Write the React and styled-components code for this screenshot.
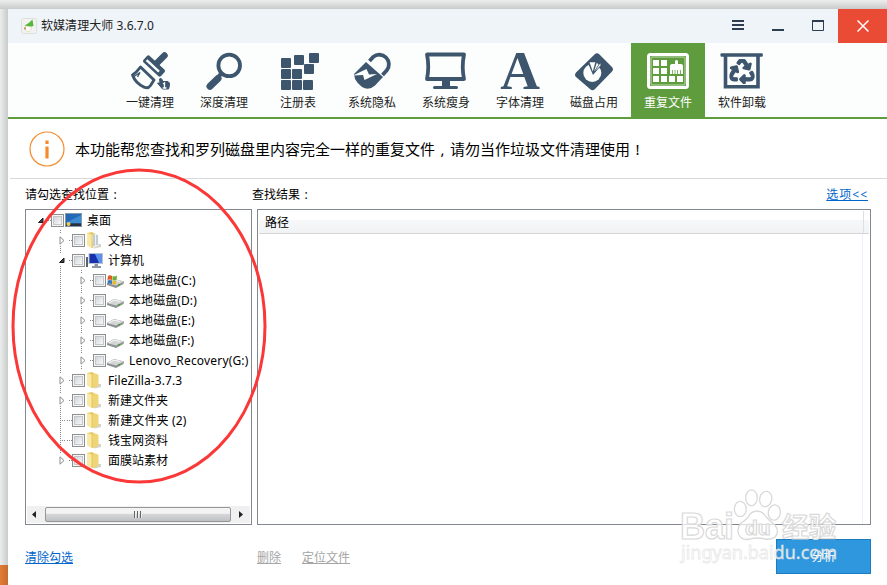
import { FaRecycle } from "react-icons/fa";
import styled, { createGlobalStyle } from "styled-components";

const INK = "#3d566e";
const GREEN = "#5f9c3d";

const tools = [
  { label: "一键清理", Icon: BrushIcon },
  { label: "深度清理", Icon: SearchIcon },
  { label: "注册表", Icon: RegistryIcon },
  { label: "系统隐私", Icon: LockIcon },
  { label: "系统瘦身", Icon: MonitorIcon },
  { label: "字体清理", Icon: FontIcon },
  { label: "磁盘占用", Icon: DiskIcon },
  { label: "重复文件", Icon: DuplicateIcon, active: true },
  { label: "软件卸载", Icon: UninstallIcon },
];

const tree = [
  { label: "桌面", depth: 0, arrow: "open", icon: "desktop" },
  { label: "文档", depth: 1, arrow: "closed", icon: "docs" },
  { label: "计算机", depth: 1, arrow: "open", icon: "computer" },
  { label: "本地磁盘(C:)", depth: 2, arrow: "closed", icon: "system", spacing: 0.08 },
  { label: "本地磁盘(D:)", depth: 2, arrow: "closed", icon: "drive", spacing: 0.08 },
  { label: "本地磁盘(E:)", depth: 2, arrow: "closed", icon: "drive", spacing: 0.08 },
  { label: "本地磁盘(F:)", depth: 2, arrow: "closed", icon: "drive", spacing: 0.08 },
  { label: "Lenovo_Recovery(G:)", depth: 2, arrow: "closed", icon: "drive", spacing: 0.17 },
  { label: "FileZilla-3.7.3", depth: 1, arrow: "closed", icon: "folder", spacing: 0.08 },
  { label: "新建文件夹", depth: 1, arrow: "closed", icon: "folder" },
  { label: "新建文件夹 (2)", depth: 1, icon: "folder", spacing: 0.15 },
  { label: "钱宝网资料", depth: 1, icon: "folder" },
  { label: "面膜站素材", depth: 1, arrow: "closed", icon: "folder", last: true },
];

function BrushIcon() {
  return (
    <ToolSvg viewBox="0 0 44 44">
      <path d="M36.5 6.5 L28 15" stroke={INK} strokeWidth="6.5" strokeLinecap="round" />
      <rect x="-12" y="-4.5" width="24" height="9" rx="2" fill={INK} transform="translate(26 17) rotate(43)" />
      <rect x="-9.5" y="-0.5" width="17" height="2.4" fill="#fcfefd" transform="translate(26 17) rotate(43)" />
      <path d="M12.5 18 L26 31 L22.5 36.5 Q20 40 16.5 38.3 Q7.5 34.5 4.5 26 Q8.5 23.5 12.5 18Z" fill="none" stroke={INK} strokeWidth="2.9" strokeLinejoin="round" />
      <path d="M6 27.5 L12 23.5 L9.5 28" fill="none" stroke={INK} strokeWidth="1.4" />
      <path d="M31.5 30 q1.5-1.5 2.5 0.5 l1 2 h5 q2 1 1.5 4 l-1 3.5 h-6 l-5-6 h2.500z" fill={INK} stroke={INK} strokeLinejoin="round" />
      <path d="M35 35 L36.5 34 V39 M34.7 39 H38.5" stroke="#fff" strokeWidth="1.3" fill="none" />
    </ToolSvg>
  );
}

function SearchIcon() {
  return (
    <ToolSvg viewBox="0 0 44 44">
      <circle cx="27.2" cy="16.4" r="10.8" fill="none" stroke={INK} strokeWidth="3.8" />
      <path d="M20 24 L17 27" stroke={INK} strokeWidth="4" />
      <path d="M16 29.5 L8 37.3" stroke={INK} strokeWidth="7" strokeLinecap="round" />
    </ToolSvg>
  );
}

const registryCells = [
  [5, 9], [18, 6], [33, 4],
  [5, 20], [16, 20], [28, 15],
  [5, 31], [16, 31], [27, 31],
];

function RegistryIcon() {
  return (
    <ToolSvg viewBox="0 0 44 44">
      {registryCells.map(([x, y]) => (
        <rect key={`${x}-${y}`} x={x} y={y} width="10" height="10" rx="1" fill={INK} />
      ))}
    </ToolSvg>
  );
}

function LockIcon() {
  return (
    <ToolSvg viewBox="0 0 44 44">
      <path d="M19.5 12 L23.2 7.9 A9.6 9.6 0 0 1 36.8 21.3 L32.5 26" fill="none" stroke={INK} strokeWidth="3.8" />
      <path d="M16 13 L33 28 L25 36.5 Q19 42 12 38 Q7 34 5 30 L4 25Z" fill={INK} />
      <path d="M3 26.5 L16.5 20 L19 25.5 L27 25 L14.5 31 L13 26Z" fill="#fcfefd" />
    </ToolSvg>
  );
}

function MonitorIcon() {
  return (
    <ToolSvg viewBox="0 0 44 44">
      <path d="M3 5.5 H40 Q37.5 17.5 40 30 H3 Q5.5 17.5 3 5.5Z" fill="none" stroke={INK} strokeWidth="3.8" strokeLinejoin="round" />
      <path d="M18 31 H26 V37 H32.5 Q34 37 34 38.5 T32.5 40 H10.5 Q9 40 9 38.5 T10.5 37 H18Z" fill={INK} />
    </ToolSvg>
  );
}

function FontIcon() {
  return (
    <ToolSvg viewBox="0 0 44 44">
      <FontLetter x="22" y="40" textAnchor="middle">A</FontLetter>
    </ToolSvg>
  );
}

function DiskIcon() {
  return (
    <ToolSvg viewBox="0 0 44 44">
      <path d="M22.5 5.5 Q25 3 27.5 5.5 L40 18 Q42 20.5 40 22.5 L23 40 Q20.5 42.5 18 40 L4 28 Q2 26 4 23.5Z" fill={INK} />
      <circle cx="20.3" cy="24" r="9" fill="#fcfefd" />
      <path d="M21 26 L15.5 13 L24 11 L32 14 L27 19Z" fill={INK} />
      <path d="M20.8 22.5 L17.5 13.3 L23.3 13.3Z M22 22.5 L24.8 13.7 L26.5 15.5Z M23 22 L28.3 14.3 L28.5 16.5Z" fill="#fcfefd" />
    </ToolSvg>
  );
}

const duplicateCells = [
  [7, 11], [15, 11], [7, 19], [15, 19], [7, 27], [15, 27], [23, 27], [31, 27],
];

function DuplicateIcon() {
  return (
    <ToolSvg viewBox="0 0 44 44">
      <rect x="2.5" y="5.5" width="39" height="33" rx="2" fill="none" stroke="#fff" strokeWidth="3" />
      <rect x="5" y="8" width="34" height="28" rx="1" fill="none" stroke="#c4dab7" strokeWidth="1" />
      {duplicateCells.map(([x, y]) => (
        <rect key={`${x}-${y}`} x={x} y={y} width="6" height="6" fill="#fff" />
      ))}
      <path d="M24 25 V17 Q24 15 26 15 H29 V12 Q30.5 10 32 12 V15 H35 Q37 15 37 17 V25Z" fill="#fff" />
      <path d="M26.5 21 V25 M29 21 V25 M31.5 21 V25 M34.5 21 V25" stroke={GREEN} strokeWidth="0.8" />
    </ToolSvg>
  );
}

function UninstallIcon() {
  return (
    <ToolSvg viewBox="0 0 44 44">
      <rect x="0.5" y="4.3" width="42.3" height="3.5" rx="1" fill={INK} />
      <path d="M5.5 7 V37.7 H38 V7" fill="none" stroke={INK} strokeWidth="3.6" />
      <FaRecycle x="9.5" y="10" size="25" color={INK} stroke={INK} strokeWidth="24" />
    </ToolSvg>
  );
}

function AppLogo() {
  return (
    <svg width="16" height="16" viewBox="0 0 16 16">
      <rect x="0.5" y="0.5" width="15" height="15" rx="2" fill="#f2f3f1" stroke="#dcdfdc" />
      <path d="M11.5 1.5 L12.5 8 Q8 9.5 3.5 7.5 Q8 5.5 11.5 1.5Z" fill="#55b83c" />
      <path d="M5 8 L10.5 9 Q10 13.5 6.5 13.5 Q3 12 5 8Z" fill="#fff" stroke="#d7c9a4" strokeWidth="0.6" />
      <path d="M3.5 9 L5 9.5 L4.5 12 L3 11Z" fill="#c98b3f" />
    </svg>
  );
}

function TreeIcon({ name }) {
  if (name === "desktop") {
    return (
      <NodeSvg viewBox="0 0 18 18">
        <rect x="0.5" y="2.5" width="16" height="13" fill="#2468b8" stroke="#8298ab" />
        <path d="M1 12 Q8 8 16 4 V12Z" fill="#3d8bd0" />
        <path d="M1 12.5 H16 V15 H1Z" fill="#292f3b" />
        <circle cx="3.5" cy="13" r="2" fill="#e8ce55" />
      </NodeSvg>
    );
  }
  if (name === "computer") {
    return (
      <NodeSvg viewBox="0 0 18 18">
        <path d="M1 6 V16" stroke="#59636e" strokeWidth="2" />
        <rect x="3" y="2.5" width="13.5" height="10" fill="#1730ae" stroke="#b9c2d3" />
        <path d="M9 3 L16 3 V12 H13Z" fill="#5b91ea" />
        <path d="M8.5 13 H12 V15 H15 V17 H6 V15 H8.5Z" fill="#8995a4" />
      </NodeSvg>
    );
  }
  if (name === "system" || name === "drive") {
    return (
      <NodeSvg viewBox="0 0 18 18">
        <path d="M0 12 L7 8 L17 10.5 L16.5 13 L9 17 L0 14Z" fill="#8f9292" />
        <path d="M0 12 L7 8 L17 10.5 L9 14.5Z" fill="#d3d5d4" />
        <path d="M2 12 L7 9.2 L13 10.5" fill="none" stroke="#f6f7f6" />
        <rect x="11" y="13" width="2" height="1.5" fill="#47a52f" />
        {name === "system" && (
          <>
            <path d="M1 5 Q3 3.5 5 5 V9 Q3 8 0.5 9Z" fill="#e05b28" />
            <path d="M5.5 5 Q8 6 10 4.5 L9.5 9 Q7 10 5.5 9Z" fill="#68ad36" />
            <path d="M0.5 9.5 Q3 8.5 5 9.5 V13 Q3 12 1 13Z" fill="#3979bd" />
            <path d="M5.5 9.5 Q8 10.5 9.5 9.5 L9 13 Q7 14 5.5 13Z" fill="#e9b82c" />
          </>
        )}
      </NodeSvg>
    );
  }
  return (
    <NodeSvg viewBox="0 0 18 18">
      <path d="M9 13 L15 13 L15 16 L8 17.5Z" fill="#d5d2c8" />
      <path d="M1 2 L6 1 L9.5 3 V16 L6 17 L1 14Z" fill="#e9c962" />
      <path d="M1 2 L5.5 3.5 V16.5 L1 14Z" fill="#f8e9a5" />
      <path d="M6.5 4 L10 2.5 L12.5 4 V14.5 L7 17Z" fill={name === "docs" ? "#edf1f1" : "#f0d577"} />
      {name === "docs" && <path d="M8 3.5 V15 M11 4 V14" stroke="#97a9b5" />}
    </NodeSvg>
  );
}

function TreeRow({ node }) {
  return (
    <Row $depth={node.depth}>
      <ArrowCell $leaf={!node.arrow} $depth={node.depth} $last={node.last}>
        {node.arrow === "open" && (
          <svg width="8" height="8" viewBox="0 0 8 8">
            <path d="M6 2 V6.5 H1.5Z" fill="#404040" stroke="#1c1c1c" />
          </svg>
        )}
        {node.arrow === "closed" && (
          <svg width="8" height="9" viewBox="0 0 8 9">
            <path d="M2 0.8 L6 4.5 L2 8.2Z" fill="#fff" stroke="#8c8c8c" />
          </svg>
        )}
      </ArrowCell>
      <Branch $leaf={!node.arrow} />
      <Check />
      <TreeIcon name={node.icon} />
      <NodeLabel $spacing={node.spacing}>{node.label}</NodeLabel>
    </Row>
  );
}

function Watermark() {
  return (
    <WatermarkSvg viewBox="0 0 180 95">
      <g fill="#fff" fillOpacity="0.7" stroke="#d9d9d9" strokeWidth="1.3">
        <path d="M87 31 Q93 31 97 38 Q101 42 105 45 Q110 52 105 57 Q101 60 95 59 Q87 57 80 59 Q72 61 69 55 Q66 49 71 43 Q78 39 80 34 Q83 31 87 31Z" />
        <ellipse cx="81.5" cy="17.8" rx="5.8" ry="8" />
        <ellipse cx="95.7" cy="19" rx="6" ry="7.7" transform="rotate(12 95.7 19)" />
        <ellipse cx="70.3" cy="29" rx="6" ry="7.7" />
        <ellipse cx="104.3" cy="32.5" rx="6" ry="7.7" transform="rotate(8 104.3 32.5)" />
      </g>
      <BrandText x="10" y="59" textLength="54" lengthAdjust="spacingAndGlyphs">Bai</BrandText>
      <BrandText x="75" y="55" $size={21}>du</BrandText>
      <BrandText x="112" y="57" $size={27}>经验</BrandText>
      <SiteText x="11" y="79" textLength="156">jingyan.baidu.com</SiteText>
    </WatermarkSvg>
  );
}

function App() {
  return (
    <Desktop>
      <GlobalStyle />
      <Window>
        <TitleBar>
          <AppLogo />
          <Title>软媒清理大师 3.6.7.0</Title>
          <WindowButton>
            <svg width="12" height="12" viewBox="0 0 12 12">
              <path d="M0 1 H12 M0 5 H12 M0 9 H12" stroke="#2c3e50" strokeWidth="2" />
            </svg>
          </WindowButton>
          <WindowButton>
            <svg width="12" height="12" viewBox="0 0 12 12">
              <path d="M0 10 H12" stroke="#2c3e50" strokeWidth="2" />
            </svg>
          </WindowButton>
          <WindowButton>
            <svg width="12" height="12" viewBox="0 0 12 12">
              <path d="M0.5 1 V10.5 H11.5 V1" fill="none" stroke="#2c3e50" />
              <path d="M0 1 H12" stroke="#2c3e50" strokeWidth="2" />
            </svg>
          </WindowButton>
          <CloseButton>
            <svg width="12" height="12" viewBox="0 0 12 12">
              <path d="M0.5 0.5 L11.5 11.5 M11.5 0.5 L0.5 11.5" stroke="#fff" strokeWidth="1.5" />
            </svg>
          </CloseButton>
        </TitleBar>

        <Toolbar>
          {tools.map(({ label, Icon, active }) => (
            <Tool key={label} $active={active}>
              <Icon />
              <span>{label}</span>
            </Tool>
          ))}
        </Toolbar>

        <Notice>
          <svg width="36" height="36" viewBox="0 0 36 36">
            <circle cx="18" cy="18" r="17" fill="none" stroke="#f58a2c" strokeWidth="1.2" />
            <path d="M18 9.5 V13 M18 15.5 V27.5" stroke="#f58a2c" strokeWidth="3.2" />
          </svg>
          <p>
            本功能帮您查找和罗列磁盘里内容完全一样的重复文件<Punct>,</Punct>请勿当作垃圾文件清理使用<Punct>!</Punct>
          </p>
        </Notice>

        <Labels>
          <LocationLabel>请勾选查找位置<Punct>:</Punct></LocationLabel>
          <span>查找结果<Punct>:</Punct></span>
          <Options>选项&lt;&lt;</Options>
        </Labels>

        <Panels>
          <TreePanel>
            <Tree>
              {tree.map((node) => (
                <TreeRow key={node.label} node={node} />
              ))}
            </Tree>
            <ScrollBar>
              <svg width="5" height="7" viewBox="0 0 5 7">
                <path d="M4 0 V7 L0 3.5Z" fill="#222" />
              </svg>
              <Thumb>
                <i />
                <i />
                <i />
              </Thumb>
              <svg width="5" height="7" viewBox="0 0 5 7">
                <path d="M1 0 V7 L5 3.5Z" fill="#222" />
              </svg>
            </ScrollBar>
          </TreePanel>
          <ResultPanel>
            <ResultHeader>
              <span>路径</span>
            </ResultHeader>
            <ResultBody />
          </ResultPanel>
        </Panels>

        <Footer>
          <ClearLink>清除勾选</ClearLink>
          <FooterLink>删除</FooterLink>
          <FooterLink>定位文件</FooterLink>
          <Analyse>分析</Analyse>
        </Footer>
      </Window>
      <Circle viewBox="0 0 258 318">
        <ellipse cx="129" cy="159" rx="126" ry="156" fill="none" stroke="#fb3838" strokeWidth="3" />
      </Circle>
      <Watermark />
    </Desktop>
  );
}

const GlobalStyle = createGlobalStyle`
  * {
    box-sizing: border-box;
  }

  body {
    margin: 0;
    overflow: hidden;
    font-family: "Noto Sans", "Noto Sans CJK SC", sans-serif;
    font-size: 12px;
    color: #000;
  }

  svg {
    display: block;
    flex-shrink: 0;
  }
`;

const Desktop = styled.div`
  position: relative;
  width: 887px;
  height: 585px;
  padding: 9px 0 0 8px;
  overflow: hidden;
  background:
    linear-gradient(90deg, #e07c35, #c76b30) 0 565px / 8px 20px no-repeat,
    linear-gradient(90deg, #eceeed, #c9cbca) 0 9px / 8px 100% no-repeat,
    linear-gradient(180deg, #eceeed, #c9cbca) 0 0 / 100% 9px no-repeat;
`;

const Window = styled.main`
  display: flex;
  flex-direction: column;
  height: 576px;
  background: #fff;
`;

const TitleBar = styled.header`
  display: flex;
  align-items: center;
  height: 34px;
  padding-left: 13px;
  background: #eff4f9;
`;

const Title = styled.h1`
  flex: 1;
  margin: 0 0 0 4px;
  font-size: 12px;
  font-weight: 400;
  line-height: 34px;
  letter-spacing: 0.05px;
  color: #222;
`;

const WindowButton = styled.div`
  display: flex;
  align-items: center;
  justify-content: center;
  width: 40px;
  height: 34px;
`;

const CloseButton = styled(WindowButton)`
  width: 49px;
  background: #e94b35;
`;

const Toolbar = styled.nav`
  display: flex;
  height: 76px;
  padding-left: 105px;
  background: #fcfefd;
  border-bottom: 2px solid ${GREEN};
`;

const Tool = styled.div`
  display: flex;
  flex-direction: column;
  align-items: center;
  width: 74px;
  padding-top: 6px;
  line-height: 20px;
  color: ${({ $active }) => ($active ? "#fff" : "#222")};
  background: ${({ $active }) => ($active ? GREEN : "transparent")};
`;

const ToolSvg = styled.svg`
  width: 44px;
  height: 44px;
  overflow: visible;
`;

const FontLetter = styled.text`
  font-family: "Liberation Serif", serif;
  font-size: 55px;
  font-weight: 700;
  fill: ${INK};
`;

const Notice = styled.section`
  display: flex;
  align-items: center;
  height: 60px;
  margin-left: 2px;
  padding-left: 19px;
  border-bottom: 1px solid #d9d9d9;
  font-size: 15px;

  p {
    margin: 0 0 0 10px;
    white-space: nowrap;
  }
`;

/* full-width punctuation centred in its cell */
const Punct = styled.span`
  display: inline-block;
  width: 1em;
  text-align: center;
`;

const Labels = styled.div`
  display: flex;
  align-items: center;
  height: 30px;
  padding: 0 19px 1px 17px;
`;

const LocationLabel = styled.span`
  width: 227px;
`;

const Options = styled.a`
  margin-left: auto;
  color: #0066cc;
  letter-spacing: 1px;
  text-decoration: underline;
`;

const Panels = styled.div`
  display: flex;
  gap: 5px;
  height: 316px;
  padding: 0 16px 0 17px;
`;

const TreePanel = styled.section`
  display: flex;
  flex-direction: column;
  width: 227px;
  border: 1px solid #828790;
`;

const Tree = styled.div`
  flex: 1;
`;

const Row = styled.div`
  display: flex;
  align-items: center;
  height: 20px;
  padding-left: ${({ $depth }) => ($depth === 0 ? 10 : 31)}px;
  ${({ $depth }) =>
    $depth === 2 &&
    `background: repeating-linear-gradient(180deg, #888 0 1px, transparent 1px 2px) 34px 0 / 1px 100% no-repeat;
     padding-left: 52px;`}
`;

const ArrowCell = styled.div`
  display: flex;
  align-items: center;
  justify-content: center;
  width: 9px;
  height: 20px;
  background: ${({ $leaf, $depth, $last }) =>
    $depth === 0
      ? "none"
      : $leaf
        ? `repeating-linear-gradient(180deg, #888 0 1px, transparent 1px 2px) 3px 0 / 1px 100% no-repeat,
           repeating-linear-gradient(90deg, #888 0 1px, transparent 1px 2px) 3px 10px / 6px 1px no-repeat`
        : `repeating-linear-gradient(180deg, #888 0 1px, transparent 1px 2px) 3px 0 / 1px 4px no-repeat,
           repeating-linear-gradient(180deg, #888 0 1px, transparent 1px 2px) 3px 16px / 1px ${$last ? 0 : 4}px no-repeat`};
`;

const Branch = styled.div`
  width: 6px;
  height: 1px;
  background: repeating-linear-gradient(90deg, transparent 0 1px, #888 1px 2px)
    ${({ $leaf }) => ($leaf ? "0" : "2px")} 0 / ${({ $leaf }) => ($leaf ? 6 : 4)}px 1px no-repeat;
`;

const Check = styled.div`
  flex-shrink: 0;
  width: 13px;
  height: 13px;
  border: 1px solid #8e8f8f;
  background: linear-gradient(135deg, #c6cad0, #f8f8f8 80%);
  box-shadow: inset 0 0 0 1px #f6f6f6, inset 0 0 0 2px #c3c7cc;
`;

const NodeSvg = styled.svg`
  width: 18px;
  height: 18px;
  margin-left: 1px;
`;

const NodeLabel = styled.span`
  margin: 2px 0 0 4px;
  white-space: nowrap;
  line-height: 20px;
  letter-spacing: ${({ $spacing = 0 }) => $spacing}px;
`;

const ScrollBar = styled.div`
  display: flex;
  align-items: center;
  justify-content: space-between;
  height: 17px;
  margin: 0 1px 1px;
  padding: 0 7px 0 5px;
  background: #f0f0f0;
`;

const Thumb = styled.div`
  display: flex;
  align-items: center;
  justify-content: center;
  gap: 1px;
  width: 186px;
  height: 15px;
  border: 1px solid #979797;
  border-radius: 2px;
  background: linear-gradient(180deg, #f3f3f3 0 40%, #d6d6d8 50%, #bfc0c4);

  i {
    width: 2px;
    height: 7px;
    background: linear-gradient(90deg, #666 50%, #eee 50%);
  }
`;

const ResultPanel = styled.section`
  display: flex;
  flex: 1;
  flex-direction: column;
  border: 1px solid #828790;
`;

const ResultHeader = styled.div`
  height: 24px;
  margin: 0 1px;
  padding: 1px 0 0 6px;
  line-height: 24px;
  border-bottom: 1px solid #d5d5d5;
  background:
    linear-gradient(#dedfe1, #dedfe1) 604px 1px / 1px 23px no-repeat,
    linear-gradient(180deg, #fff 0 42%, #f7f8fa 43%, #f1f2f4);
`;

const ResultBody = styled.div`
  flex: 1;
  width: 605px;
  border-right: 1px solid #e9f1fb;
`;

const Footer = styled.footer`
  display: flex;
  align-items: flex-start;
  padding: 14px 16px 0 17px;
  line-height: 38px;
`;

const FooterLink = styled.a`
  margin-right: 21px;
  color: #a5a5a5;
  text-decoration: underline;
`;

const ClearLink = styled(FooterLink)`
  width: 232px;
  margin-right: 0;
  color: #0066cc;
`;

const Analyse = styled.button`
  width: 95px;
  height: 35px;
  margin-left: auto;
  padding: 0;
  font: inherit;
  line-height: 33px;
  color: #fff;
  border: 1px solid #1c7cc0;
  background: #2f97de;
`;

const Circle = styled.svg`
  position: absolute;
  top: 167px;
  left: 10px;
  width: 258px;
  height: 318px;
`;

const WatermarkSvg = styled.svg`
  position: absolute;
  top: 480px;
  left: 670px;
  width: 180px;
  height: 95px;
`;

const BrandText = styled.text`
  font-family: "Liberation Sans", "Noto Sans CJK SC", sans-serif;
  font-size: ${({ $size = 37 }) => $size}px;
  font-weight: 700;
  fill: rgba(255, 255, 255, 0.75);
  stroke: #d9d9d9;
  stroke-width: 1.2px;
`;

const SiteText = styled.text`
  font-family: "Noto Sans", sans-serif;
  font-size: 18px;
  fill: rgba(255, 255, 255, 0.85);
  stroke: rgba(215, 215, 215, 0.6);
  stroke-width: 0.8px;
`;

export default App;
